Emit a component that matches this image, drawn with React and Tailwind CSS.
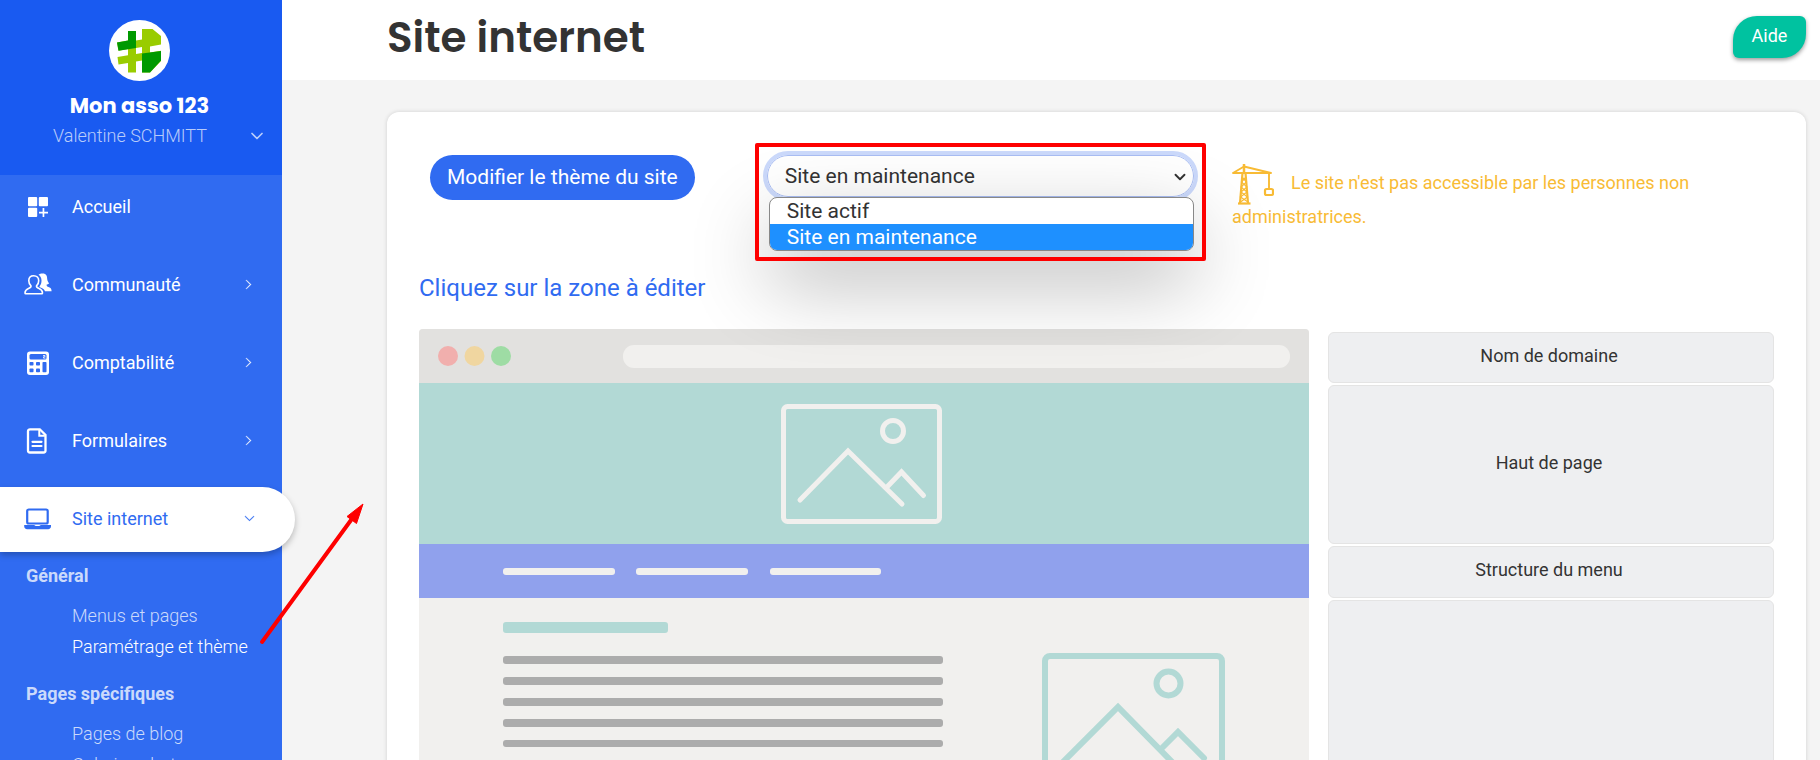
import { useState } from "react";
import { BsChevronDown, BsChevronRight } from "react-icons/bs";
import { FiChevronDown } from "react-icons/fi";

const menuItems = [
  { id: "accueil", title: "Accueil", icon: "grid", hasSub: false },
  { id: "communaute", title: "Communauté", icon: "users", hasSub: true },
  { id: "comptabilite", title: "Comptabilité", icon: "calculator", hasSub: true },
  { id: "formulaires", title: "Formulaires", icon: "file", hasSub: true },
  { id: "site", title: "Site internet", icon: "laptop", hasSub: true },
];

const subMenus = [
  { title: "Général", links: ["Menus et pages", "Paramétrage et thème"] },
  { title: "Pages spécifiques", links: ["Pages de blog", "Galeries photo"] },
];

const Logo = () => (
  <svg viewBox="0 0 61 61" className="w-[61px] h-[61px]" aria-hidden="true">
    <circle cx="30.5" cy="30.5" r="30.5" fill="#fff" />
    <path d="M19 11h8v9.500l6-1V9h10.500L52 16v8.500l-11 2v6l11-1.700V41L41 52.500h-8V40.500l-6 1v11h-8V43L9.500 44.500 8.500 37l10.500-1.700V29L9.500 30.700 8 22.500l11-2Zm8 17v6l6-1v-6Z" fill="#99cc00" fillRule="evenodd" />
    <path d="M8 22.500 19 20.500V11h8v17L9.500 30.700Z" fill="#009900" />
    <path d="M33 33.500 52 31v9.500L41 52.500h-8Z" fill="#009900" />
  </svg>
);

const MenuIcon = ({ name }) => {
  if (name === "grid") {
    return (
      <svg viewBox="0 0 28 28" className="w-7 h-7" fill="currentColor" aria-hidden="true">
        <rect x="4" y="4" width="9.200" height="9.200" rx="1" />
        <rect x="14.800" y="4" width="9.200" height="9.200" rx="1" />
        <rect x="4" y="14.800" width="9.200" height="9.200" rx="1" />
        <path d="M18.600 15h1.700v3.700H24v1.700h-3.700V24h-1.700v-3.600H15v-1.700h3.600Z" />
      </svg>
    );
  }
  if (name === "users") {
    return (
      <svg viewBox="0 0 28 28" className="w-7 h-7" aria-hidden="true">
        <path
          d="M9.700 4.700c-3 0-4.900 2-4.900 5 0 2.200.9 4 2.200 5.200.3 1.300-.3 1.700-2.500 2.600-2.400 1-3.500 1.700-3.500 4.500 0 .6.300.8.8.8h16c.5 0 .7-.3.700-.8 0-2.800-1.100-3.500-3.500-4.500-2.200-.9-2.800-1.300-2.500-2.600 1.300-1.200 2.200-3 2.200-5.200 0-3-1.900-5-5-5Z"
          fill="none"
          stroke="currentColor"
          strokeWidth="1.600"
        />
        <path
          d="M14.500 3.800C15.500 3 17 2.500 18.500 2.500c4 0 4.700 2.500 4.700 5.500 0 2 1.300 3 1.800 4.500-.8.900-1.600 1-2.500 1.200.2 1.600 1 1.900 2.500 2.600 1.700.7 2.600 1.500 2.600 4H21c-.7-1.800-2-2.800-4.500-3.700-.8-.4-1.200-.7-.9-1.300 1.300-1.500 1.900-3.300 1.900-5.500 0-2.800-1-4.800-3-6Z"
          fill="currentColor"
        />
      </svg>
    );
  }
  if (name === "calculator") {
    return (
      <svg viewBox="0 0 28 28" className="w-7 h-7" aria-hidden="true">
        <rect x="3" y="2.500" width="22" height="23.500" rx="3" fill="currentColor" />
        <g fill="#306bf1">
          <rect x="5.500" y="5" width="17" height="5.500" rx="1.500" />
          <rect x="5.500" y="13" width="4" height="3.500" rx=".8" />
          <rect x="12" y="13" width="4" height="3.500" rx=".8" />
          <rect x="5.500" y="19.500" width="4" height="3.800" rx=".8" />
          <rect x="12" y="19.500" width="4" height="3.800" rx=".8" />
          <rect x="18.500" y="13" width="4" height="10.300" rx=".8" />
        </g>
        <path d="M19 6.500h2v1.300h-1.500v1.300h2" fill="none" stroke="currentColor" strokeWidth=".8" />
      </svg>
    );
  }
  if (name === "file") {
    return (
      <svg viewBox="0 0 28 28" className="w-7 h-7" fill="none" stroke="currentColor" aria-hidden="true">
        <path d="M6 2.300h9.800L21.500 8v15.500a2 2 0 0 1-2 2H6a2 2 0 0 1-2-2V4.300a2 2 0 0 1 2-2Z" strokeWidth="2.300" />
        <path d="M15.300 3v5.700h5.500" strokeWidth="2" />
        <path d="M8.500 14.800h9M8.500 19h9" strokeWidth="2.200" strokeLinecap="round" />
      </svg>
    );
  }
  return (
    <svg viewBox="0 0 28 28" className="w-7 h-7" aria-hidden="true">
      <rect x="3.200" y="4.500" width="20.500" height="14" rx="1.500" fill="none" stroke="currentColor" strokeWidth="2.200" />
      <path d="M.2 20h10.300c.2.700.7.900 1.300.9h3.500c.6 0 1-.2 1.200-.9H27v1.300c0 1.700-1.200 2.900-2.900 2.900H3.200C1.400 24.200.2 23 .2 21.300Z" fill="currentColor" />
    </svg>
  );
};

const Crane = () => (
  <svg viewBox="0 0 42 42" className="inline-block align-middle w-[42px] h-[42px]" fill="none" stroke="#f8bb35" aria-hidden="true">
    <path d="M12 1v10" strokeWidth="2.500" />
    <path d="M12 3.500 1 10h38L12 3.500M37 10v15" strokeWidth="1.900" strokeLinejoin="round" />
    <path d="M10.500 10 8 40M13.500 10 16 40" strokeWidth="2.200" />
    <path d="m10 14 4.500 5-5.500 5 6 5-6.500 5 7.500 5M14 14l-4.500 5 5.500 5-6 5 6.500 5-7 5" strokeWidth="1.200" />
    <path d="M6 40.500h12.500" strokeWidth="2.200" />
    <rect x="33" y="26" width="8" height="6" rx="1.500" strokeWidth="2.200" />
  </svg>
);

// Outline of the browser window shown as a preview of the site
const SitePreview = () => (
  <svg
    viewBox="0 0 890 900"
    preserveAspectRatio="none"
    className="block w-full h-[900px]"
    role="img"
    aria-label="Aperçu du site"
  >
    <rect width="890" height="900" rx="4" fill="#f1f0ee" />
    <path d="M4 0h882q4 0 4 4v50H0V4q0-4 4-4Z" fill="#e2e1df" />
    <circle cx="29" cy="27" r="10" fill="#f1afad" />
    <circle cx="55.500" cy="27" r="10" fill="#f0d6a0" />
    <circle cx="82" cy="27" r="10" fill="#9edca4" />
    <rect x="204" y="16" width="667" height="23" rx="11" fill="#f1f0ee" />
    <rect y="54" width="890" height="161" fill="#b2d9d5" />
    <g fill="none" stroke="#f1f0ee" strokeWidth="5" strokeLinecap="round">
      <rect x="364.500" y="77.500" width="156" height="115" rx="4" />
      <circle cx="474" cy="102" r="10.500" />
      <path d="m381 171 48-49 54 53M468 158l14.500-15 22 23.500" />
    </g>
    <rect y="215" width="890" height="54" fill="#90a1ed" />
    <g fill="#f1f0ee">
      <rect x="84" y="239" width="112" height="7" rx="3" />
      <rect x="217" y="239" width="112" height="7" rx="3" />
      <rect x="351" y="239" width="111" height="7" rx="3" />
    </g>
    <rect x="84" y="293" width="165" height="11" rx="3" fill="#b2d9d5" />
    <g fill="#acacac">
      <rect x="84" y="327" width="440" height="8" rx="3" />
      <rect x="84" y="348" width="440" height="8" rx="3" />
      <rect x="84" y="369" width="440" height="8" rx="3" />
      <rect x="84" y="390" width="440" height="8" rx="3" />
      <rect x="84" y="411" width="440" height="7" rx="3" />
    </g>
    <g fill="none" stroke="#b2d9d5" strokeWidth="6" strokeLinecap="round">
      <rect x="626" y="327" width="177" height="136" rx="5" />
      <circle cx="749.500" cy="354.500" r="12" />
      <path d="m642 435 57-57 61 62M743 419l16-16 26 26" />
    </g>
  </svg>
);

const Sidebar = () => {
  const [active, setActive] = useState("site");

  return (
    <aside className="relative z-10 w-[282px] shrink-0 bg-[#306bf1] text-white">
      <div className="h-[175px] bg-[#195af1] pt-5 pr-[3px] flex flex-col items-center">
        <Logo />
        <p className="mt-[11px] text-[21px] leading-7 font-bold font-[Poppins,Inter,sans-serif]">Mon asso 123</p>
        <button type="button" className="w-full flex items-center justify-end pr-3 text-lg leading-8 font-light text-white/70">
          <span>Valentine SCHMITT</span>
          <FiChevronDown className="ml-10 w-5 h-5" />
        </button>
      </div>
      <nav>
        <ul>
          {menuItems.map((item) => (
            <li key={item.id} className="h-[78px] flex items-start">
              <a
                href={`#${item.id}`}
                onClick={() => setActive(item.id)}
                className={`h-[65px] pb-0.5 flex items-center pl-6 text-lg ${
                  active === item.id
                    ? "w-[295px] shrink-0 bg-white text-[#306bf1] rounded-r-full shadow-[0_3px_6px_rgba(0,0,0,0.25)] pr-10"
                    : "w-full pr-7"
                }`}
              >
                <MenuIcon name={item.icon} />
                <span className="ml-5 flex-1">{item.title}</span>
                {item.hasSub &&
                  (active === item.id ? (
                    <BsChevronDown className="w-[11px] h-[11px] stroke-[0.5]" />
                  ) : (
                    <BsChevronRight className="w-[11px] h-[11px] stroke-[0.5]" />
                  ))}
              </a>
            </li>
          ))}
        </ul>
        {subMenus.map((group) => (
          <div key={group.title} className="mb-[21px]">
            <h2 className="pl-[26px] text-lg leading-[22px] font-bold text-white/75">{group.title}</h2>
            <ul className="mt-[13px]">
              {group.links.map((link) => (
                <li key={link}>
                  <a
                    href="#site"
                    className={`block pl-[72px] text-lg leading-[31px] font-light ${
                      link === "Paramétrage et thème" ? "text-white" : "text-white/75"
                    }`}
                  >
                    {link}
                  </a>
                </li>
              ))}
            </ul>
          </div>
        ))}
      </nav>
    </aside>
  );
};

const zoneClass =
  "w-full pb-1 pr-1 rounded-md border border-[#e4e4e4] bg-[#eeeff1] text-lg leading-6 text-[#333] flex items-center justify-center";

const App = () => {
  const [status, setStatus] = useState("Site en maintenance");

  return (
    <div className="relative flex h-screen overflow-hidden bg-[#f4f4f4] font-[Roboto,sans-serif] text-[#333]">
      <Sidebar />
      <div className="flex-1 min-w-0">
        <header className="h-20 bg-white flex items-start justify-between pl-[105px] pr-[14px]">
          <h1 className="mt-2 text-[42px] leading-[60px] font-semibold font-[Poppins,Inter,sans-serif]">Site internet</h1>
          <button
            type="button"
            className="mt-4 pb-0.5 w-[73px] h-[42px] bg-[#00c2a0] text-white text-lg rounded-tl-[24px] rounded-br-[24px] rounded-tr-[6px] rounded-bl-[6px] shadow-[0_2px_4px_rgba(0,0,0,0.4)]"
          >
            Aide
          </button>
        </header>

        <main className="mt-8 ml-[105px] mr-[14px] px-8 rounded-xl bg-white shadow-[0_0_4px_rgba(0,0,0,0.15)]">
          <div className="flex h-[154px] pt-[43px]">
            <div className="w-1/4 shrink-0 pl-[11px]">
              <button type="button" className="h-[45px] px-[17px] rounded-full bg-[#306bf1] text-white text-[21px] whitespace-nowrap">
                Modifier le thème du site
              </button>
            </div>

            <div className="relative flex-1 ml-[9px] h-[42px]">
              <select
                aria-label="État du site"
                value={status}
                onChange={(e) => setStatus(e.target.value)}
                className="appearance-none w-full h-[42px] rounded-full border border-[#a9bdf3] bg-white pt-0.5 pl-[17px] text-[21px] outline-4 outline-[#cbd9fb]"
              >
                <option>Site actif</option>
                <option>Site en maintenance</option>
              </select>
              <BsChevronDown className="absolute right-2 top-4 w-3 h-3 stroke-[1.5]" />
              <ul className="absolute z-10 left-0.5 right-0 top-[42px] overflow-hidden rounded-lg border border-[#888] bg-white text-[21px] leading-[26px] shadow-[0_30px_80px_rgba(0,0,0,0.3)]">
                <li className="pl-[17px]">Site actif</li>
                <li className="pl-[17px] bg-[#1e90ff] text-white">Site en maintenance</li>
              </ul>
              <div className="absolute z-20 -left-3 -right-3 -top-3 h-[118px] border-4 border-[#fe0000] rounded-xs pointer-events-none" />
            </div>

            <p className="w-2/5 shrink-0 ml-[38px] pt-2 text-lg leading-6 text-[#f8bb35]">
              <Crane />
              <span className="ml-[17px]">Le site n'est pas accessible par les personnes non administratrices.</span>
            </p>
          </div>

          <h2 className="mt-1 mb-[23px] text-2xl leading-9 text-[#306bf1]">Cliquez sur la zone à éditer</h2>

          <div className="flex gap-[19px]">
            <div className="w-[890px]">
              <SitePreview />
            </div>
            <div className="flex-1 pt-[3px] flex flex-col gap-0.5">
              <button type="button" className={`${zoneClass} h-[51px]`}>Nom de domaine</button>
              <button type="button" className={`${zoneClass} h-[159px]`}>Haut de page</button>
              <button type="button" className={`${zoneClass} h-[52px]`}>Structure du menu</button>
              <button type="button" aria-label="Contenu" className={`${zoneClass} h-[500px]`} />
            </div>
          </div>
        </main>
      </div>

      {/* arrow pointing from the sub menu to the page */}
      <svg viewBox="0 0 110 150" className="absolute z-20 left-[256px] top-[498px] w-[110px] h-[150px] pointer-events-none" aria-hidden="true">
        <path d="M6 144 98 18" stroke="#fe0000" strokeWidth="4" strokeLinecap="round" />
        <path d="M107 6 100.500 25.500 91 18.500Z" fill="#fe0000" stroke="#fe0000" />
      </svg>
    </div>
  );
};

export default App;
